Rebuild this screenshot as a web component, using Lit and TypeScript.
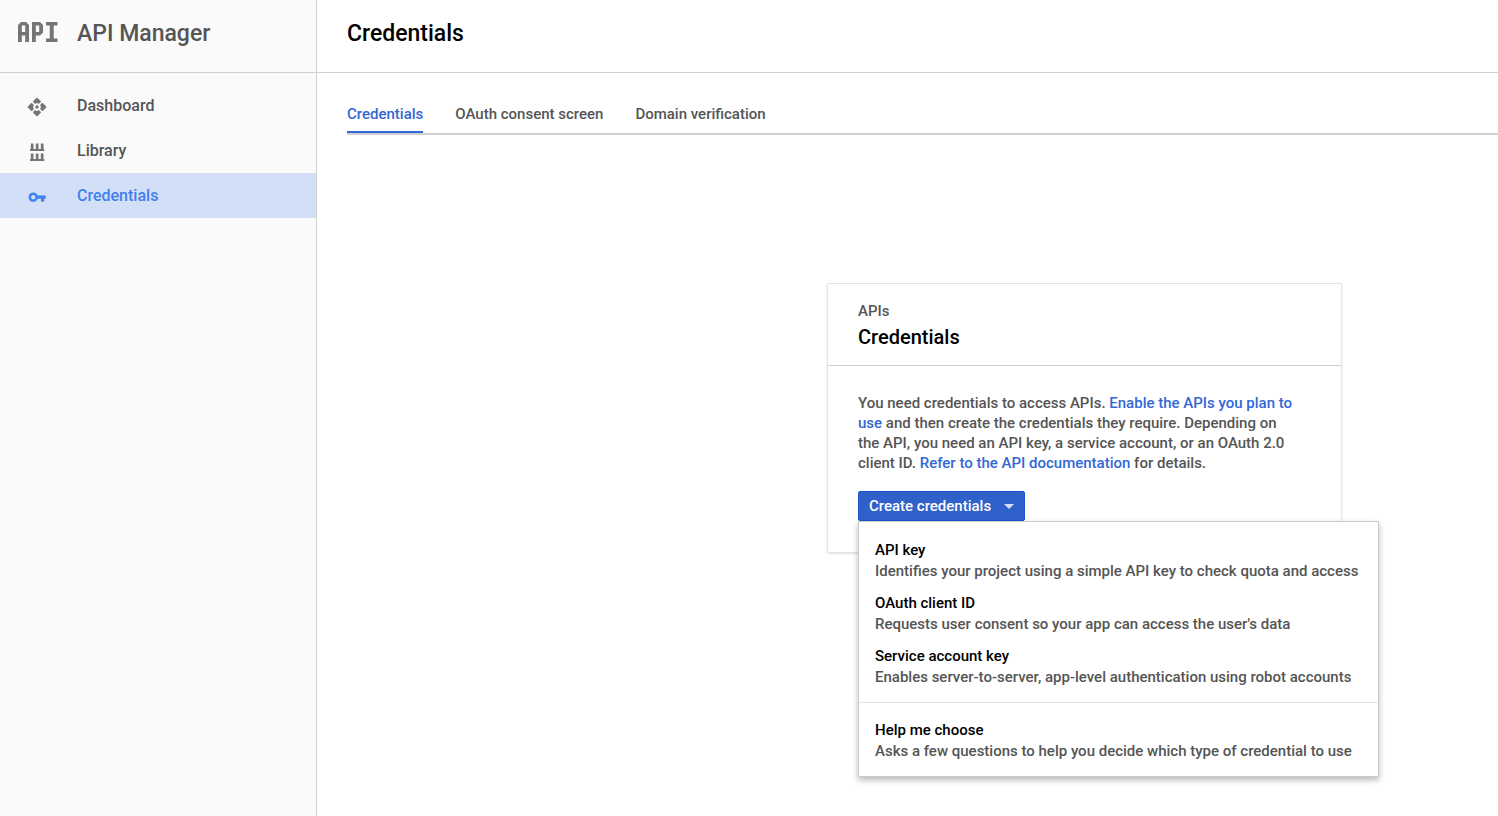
import { LitElement, html, css, svg } from "lit";
import { customElement } from "lit/decorators.js";
import { classMap } from "lit/directives/class-map.js";

const arm = "M10 .4L13.9 4.2V5L12 6.8H11.2L10 5.8L8.8 6.8H8L6.1 5V4.2Z";

const dashboardIcon = svg`
  <g fill="currentColor">
    <circle cx="10" cy="10" r="1.7"></circle>
    ${[0, 90, 180, 270].map((deg) => svg`<path transform="rotate(${deg} 10 10)" d=${arm}></path>`)}
  </g>`;

const libraryIcon = svg`
  <path fill="currentColor" d="M3.8 1.5h2.7V7H3.8zM8.8 1.5h2.7V7H8.800zM13.8 1.5h2.7V7H13.8zM3 7h14.3v2H3zM3.8 11.5h2.7V17H3.8zM8.8 11.5h2.7V17H8.8zM13.8 11.5h2.7V17H13.8zM3 17h14.3v2H3z"></path>`;

const keyIcon = svg`
  <path fill="currentColor" transform="translate(.8 .8) scale(.78)" d="M12.65 10C11.83 7.67 9.61 6 7 6c-3.31 0-6 2.69-6 6s2.69 6 6 6c2.61 0 4.83-1.67 5.65-4H17v4h4v-4h2v-4H12.65zM7 14.8c-1.55 0-2.8-1.25-2.8-2.8s1.25-2.8 2.8-2.8 2.8 1.25 2.8 2.8-1.25 2.8-2.8 2.8z"></path>`;

const navItems = [
  { label: "Dashboard", icon: dashboardIcon, active: false },
  { label: "Library", icon: libraryIcon, active: false },
  { label: "Credentials", icon: keyIcon, active: true },
];

const tabs = ["Credentials", "OAuth consent screen", "Domain verification"];

const options = [
  { title: "API key", text: "Identifies your project using a simple API key to check quota and access" },
  { title: "OAuth client ID", text: "Requests user consent so your app can access the user's data" },
  { title: "Service account key", text: "Enables server-to-server, app-level authentication using robot accounts" },
];

const help = { title: "Help me choose", text: "Asks a few questions to help you decide which type of credential to use" };

@customElement("app-root")
export class AppRoot extends LitElement {
  static styles = css`
    :host {
      display: grid;
      grid-template-columns: 317px minmax(0, 1fr);
      min-height: 100vh;
      background: #fff;
      color: #555;
      font: 500 15px/20px Roboto, sans-serif;
    }
    * { box-sizing: border-box; }
    a { color: #3367d6; text-decoration: none; }
    h1, h2, p { margin: 0; font-weight: 500; }

    .side { background: #fafafa; border-right: 1px solid #d0d0d0; }
    .brand {
      display: flex;
      align-items: flex-start;
      gap: 19px;
      height: 73px;
      padding: 17px 18px;
      border-bottom: 1px solid #d0d0d0;
      font-size: 23px;
      line-height: 34px;
    }
    .logo { width: 40px; height: 20px; margin-top: 5px; color: #757575; }
    .nav { padding-top: 10px; }
    .link {
      display: flex;
      align-items: center;
      gap: 30px;
      height: 45px;
      padding: 0 27px;
      color: #555;
      font-size: 16px;
    }
    .icon { width: 20px; height: 20px; margin-top: 3px; color: #757575; }
    .link.active { background: #d3dff7; color: #4180ef; }
    .link.active .icon { color: #4180ef; }

    .head {
      height: 73px;
      padding: 17px 30px;
      border-bottom: 1px solid #d0d0d0;
      color: #000;
    }
    .head h1 { font-size: 23px; line-height: 34px; }
    .tabs {
      display: flex;
      gap: 32px;
      margin: 31px 0 0 30px;
      border-bottom: 2px solid #d0d0d0;
    }
    .tab { height: 29px; color: #555; }
    .tab.active { color: #3367d6; border-bottom: 2px solid #3367d6; }

    .card {
      width: 515px;
      margin: 148px 156px 0 auto;
      border: 1px solid #e4e4e4;
      border-radius: 2px;
      box-shadow: 0 1px 2px rgba(0, 0, 0, 0.12);
    }
    .card-head { padding: 17px 30px 12px; border-bottom: 1px solid #d0d0d0; }
    .card-head h2 { color: #000; font-size: 20px; line-height: 32px; }
    .card-body { padding: 27px 30px 31px; }
    .intro { padding-right: 12px; }
    .picker { position: relative; margin-top: 18px; }
    .create {
      display: flex;
      align-items: center;
      gap: 13px;
      height: 30px;
      padding: 0 10px;
      border: 1px solid #1a56cc;
      border-radius: 2px;
      background: #3060ca;
      color: #fff;
      font: inherit;
    }
    .caret { width: 10px; height: 5px; color: #d6dff4; }
    .menu {
      position: absolute;
      top: 100%;
      left: 0;
      width: max-content;
      padding: 12px 0 9px;
      border: 1px solid #ccc;
      background: #fff;
      box-shadow: 0 3px 6px rgba(0, 0, 0, 0.28);
    }
    .option {
      display: block;
      width: 100%;
      padding: 6px 20px 5px 16px;
      border: 0;
      background: none;
      color: #555;
      font: inherit;
      text-align: left;
    }
    .title { display: block; line-height: 20px; color: #000; }
    .text { display: block; line-height: 22px; }
    .split { margin-top: 9px; padding-top: 11px; border-top: 1px solid #e4e4e4; }
  `;

  private option(o: { title: string; text: string }) {
    return html`<button class="option" type="button" role="menuitem">
      <span class="title">${o.title}</span><span class="text">${o.text}</span>
    </button>`;
  }

  render() {
    return html`
      <aside class="side">
        <div class="brand">
          <svg class="logo" viewBox="0 0 40 20" fill="currentColor" fill-rule="evenodd" aria-hidden="true">
            <path d="M0 20V3L3 0H8L11 3V20H7.2V13.500H3.800V20zM3.800 10H7.200V3.500H3.800zM14 20V0H22L25 3V10.500L22 13.500H17.800V20zM17.800 10H21.200V3.500H17.800zM28 0H39.500V3.500H35.700V16.500H39.500V20H28V16.500H31.800V3.500H28z"></path>
          </svg>
          <span>API Manager</span>
        </div>
        <nav class="nav">
          ${navItems.map(
            (n) => html`<a href="#" class=${classMap({ link: true, active: n.active })}>
              <svg class="icon" viewBox="0 0 20 20" aria-hidden="true">${n.icon}</svg><span>${n.label}</span>
            </a>`,
          )}
        </nav>
      </aside>
      <main>
        <header class="head"><h1>Credentials</h1></header>
        <nav class="tabs">
          ${tabs.map((t, i) => html`<a href="#" class=${classMap({ tab: true, active: i === 0 })}>${t}</a>`)}
        </nav>
        <section class="card">
          <header class="card-head">
            <p>APIs</p>
            <h2>Credentials</h2>
          </header>
          <div class="card-body">
            <p class="intro">
              You need credentials to access APIs. <a href="#">Enable the APIs you plan to use</a> and then create the
              credentials they require. Depending on the API, you need an API key, a service account, or an OAuth 2.0
              client ID. <a href="#">Refer to the API documentation</a> for details.
            </p>
            <div class="picker">
              <button class="create" type="button" aria-haspopup="menu" aria-expanded="true">
                Create credentials
                <svg class="caret" viewBox="0 0 10 5" aria-hidden="true"><path fill="currentColor" d="M0 0h10L5 5z"></path></svg>
              </button>
              <div class="menu" role="menu">
                ${options.map((o) => this.option(o))}
                <div class="split">${this.option(help)}</div>
              </div>
            </div>
          </div>
        </section>
      </main>
    `;
  }
}
